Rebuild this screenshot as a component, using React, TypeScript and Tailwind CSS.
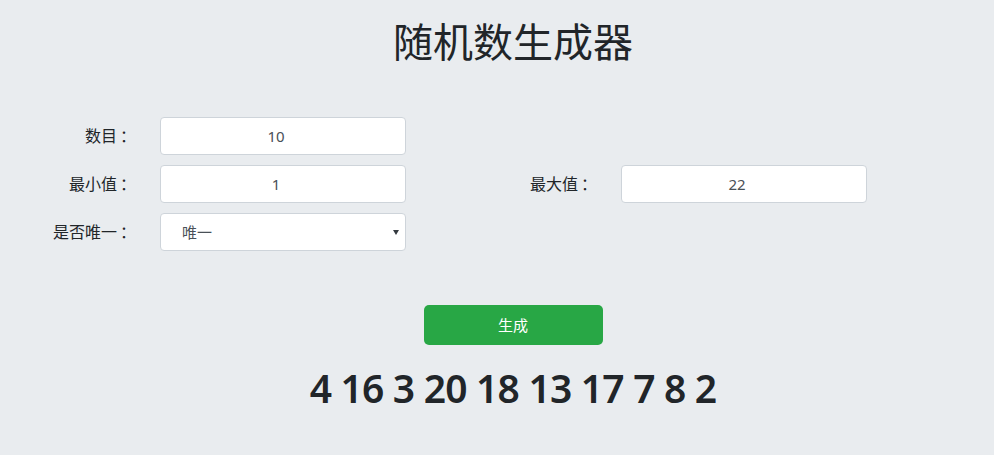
import { useState } from 'react';

const font = { fontFamily: '"Noto Sans", "Noto Sans CJK SC", sans-serif' };

function Label({ text }: { text: string }) {
  return (
    <label className="pr-[24px] text-right text-[16px] leading-[38px]">
      {text}
      <span className="ml-[3px]">：</span>
    </label>
  );
}

export default function App() {
  const [count, setCount] = useState('10');
  const [min, setMin] = useState('1');
  const [max, setMax] = useState('22');
  const [unique, setUnique] = useState('唯一');
  const [result] = useState([4, 16, 3, 20, 18, 13, 17, 7, 8, 2]);

  return (
    <div className="min-h-[455px] w-full bg-[#e9ecef] text-[#212529]" style={font}>
      {/* Title */}
      <h1 className="ml-[32px] pt-[18px] text-center text-[40px] leading-[48px] font-normal">随机数生成器</h1>

      {/* Form */}
      <div className="mt-[51px] grid grid-cols-[160px_246px_215px_246px] gap-y-[10px]">
        <Label text="数目" />
        <input
          value={count}
          onChange={(e) => setCount(e.target.value)}
          className="h-[38px] rounded border border-[#ced4da] bg-white pr-[14px] text-center text-[15px] text-[#495057] outline-none"
        />
        <div />
        <div />

        <Label text="最小值" />
        <input
          value={min}
          onChange={(e) => setMin(e.target.value)}
          className="h-[38px] rounded border border-[#ced4da] bg-white pr-[14px] text-center text-[15px] text-[#495057] outline-none"
        />
        <Label text="最大值" />
        <input
          value={max}
          onChange={(e) => setMax(e.target.value)}
          className="h-[38px] rounded border border-[#ced4da] bg-white pr-[14px] text-center text-[15px] text-[#495057] outline-none"
        />

        <Label text="是否唯一" />
        <div className="relative">
          <select
            value={unique}
            onChange={(e) => setUnique(e.target.value)}
            className="h-[38px] w-full appearance-none rounded border border-[#ced4da] bg-white pl-[21px] text-[15px] text-[#495057] outline-none"
          >
            <option value="唯一">唯一</option>
            <option value="可重复">可重复</option>
          </select>
          <svg
            className="pointer-events-none absolute right-[7px] top-[17px]"
            width="6"
            height="5"
            viewBox="0 0 6 5"
          >
            <path d="M0 0 H6 L3 5 Z" fill="#343a40" />
          </svg>
        </div>
      </div>

      {/* Button */}
      <div className="ml-[32px] mt-[54px] flex justify-center">
        <button className="h-[40px] w-[179px] rounded-[5px] bg-[#28a745] text-[15px] text-white">生成</button>
      </div>

      {/* Result */}
      <div className="ml-[32px] mt-[19px] text-center text-[39px] leading-[48px] font-semibold tracking-[-0.8px]">
        {result.join(' ')}
      </div>
    </div>
  );
}
